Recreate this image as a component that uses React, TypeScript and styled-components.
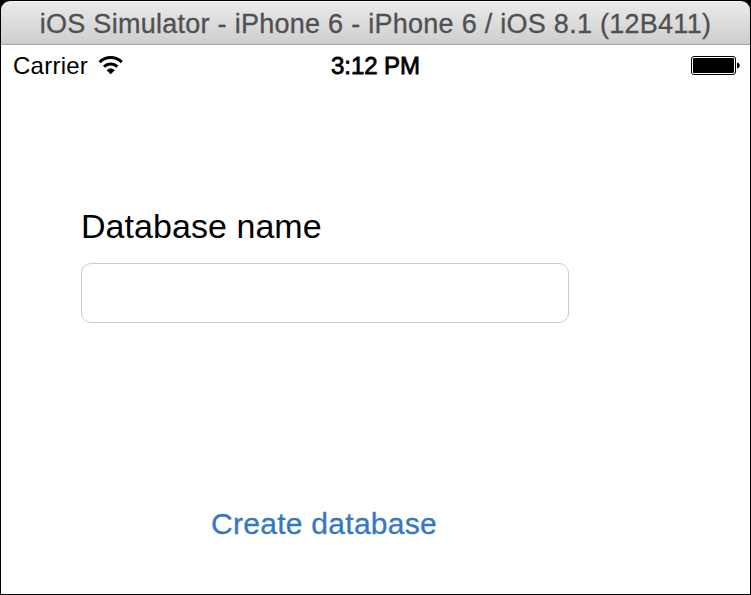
import React from "react";
import styled, { createGlobalStyle } from "styled-components";

const GlobalStyle = createGlobalStyle`
  * { box-sizing: border-box; }
  body { margin: 0; background: #000; font-family: "Liberation Sans", Arial, sans-serif; }
`;

const Window = styled.main`
  width: 751px;
  height: 595px;
  padding: 1px;
  background: #000;
  display: flex;
  flex-direction: column;
`;

const TitleBar = styled.header`
  flex: 0 0 44px;
  display: flex;
  justify-content: center;
  align-items: center;
  padding-top: 2px;
  border-radius: 9px 9px 0 0;
  border-top: 1px solid #f4f4f4;
  border-bottom: 1px solid #a5a5a5;
  background: linear-gradient(#eaeaea, #cecece);
`;

const Title = styled.h1`
  margin: 0;
  font-size: 27px;
  line-height: 32px;
  font-weight: 400;
  letter-spacing: 0.27px;
  white-space: nowrap;
  color: #505050;
  -webkit-text-stroke: 0.3px #505050;
`;

const Screen = styled.section`
  flex: 1;
  display: flex;
  flex-direction: column;
  background: #fff;
  color: #000;
`;

const StatusBar = styled.div`
  height: 40px;
  display: grid;
  grid-template-columns: 1fr auto 1fr;
  align-items: center;
  padding: 0 10px 0 12px;
  font-size: 24px;
  line-height: 28px;
`;

const StatusText = styled.span`
  padding-top: 2px;
  letter-spacing: 0.25px;
`;

const Carrier = styled.div`
  display: flex;
  align-items: center;
  gap: 10px;
`;

const Clock = styled(StatusText)`
  margin-left: -2px;
  letter-spacing: -0.05px;
  -webkit-text-stroke: 0.8px #000;
`;

const BatterySlot = styled.div`
  display: flex;
  justify-content: flex-end;
`;

const Form = styled.form`
  display: flex;
  flex-direction: column;
  align-items: flex-start;
  padding: 121px 0 0 80px;
`;

const Label = styled.label`
  font-size: 34px;
  line-height: 40px;
  letter-spacing: 0.05px;
`;

const Field = styled.input`
  width: 488px;
  height: 60px;
  margin-top: 17px;
  padding: 0 14px;
  border: 1px solid #ccc;
  border-radius: 10px;
  background: #fff;
  font: inherit;
  font-size: 28px;
  outline: none;
`;

const CreateButton = styled.button`
  margin: 183px 0 0 130px;
  padding: 0;
  border: 0;
  background: none;
  font: inherit;
  font-size: 30px;
  line-height: 36px;
  letter-spacing: 0.28px;
  color: #3478c4;
  -webkit-text-stroke: 0.3px #3478c4;
`;

const WifiIcon = () => (
  <svg width="26" height="20" viewBox="0 0 26 20" fill="none" stroke="#000" strokeWidth="3">
    <path d="M1.6 7.1C8 1.1 17.4 1.1 23.8 7.1" />
    <path d="M6 11.6C9.8 8 15.6 8 19.4 11.6" />
    <path d="M8.6 15.2C10.8 13 14.6 13 16.8 15.2L12.7 19.2Z" fill="#000" stroke="none" />
  </svg>
);

const BatteryIcon = () => (
  <svg width="50" height="20" viewBox="0 0 50 20">
    <rect x="1.5" y="1.5" width="44" height="18" rx="2.5" fill="#fff" stroke="#000" />
    <rect x="3" y="3" width="41" height="15" rx="1" />
    <path d="M47 7.5C50.6 8 50.6 13 47 13.5Z" />
  </svg>
);

export default function App() {
  return (
    <>
      <GlobalStyle />
      <Window>
        <TitleBar>
          <Title>iOS Simulator - iPhone 6 - iPhone 6 / iOS 8.1 (12B411)</Title>
        </TitleBar>
        <Screen>
          <StatusBar>
            <Carrier>
              <StatusText>Carrier</StatusText>
              <WifiIcon />
            </Carrier>
            <Clock as="time">3:12 PM</Clock>
            <BatterySlot>
              <BatteryIcon />
            </BatterySlot>
          </StatusBar>
          <Form>
            <Label htmlFor="database-name">Database name</Label>
            <Field id="database-name" type="text" />
            <CreateButton type="button">Create database</CreateButton>
          </Form>
        </Screen>
      </Window>
    </>
  );
}
